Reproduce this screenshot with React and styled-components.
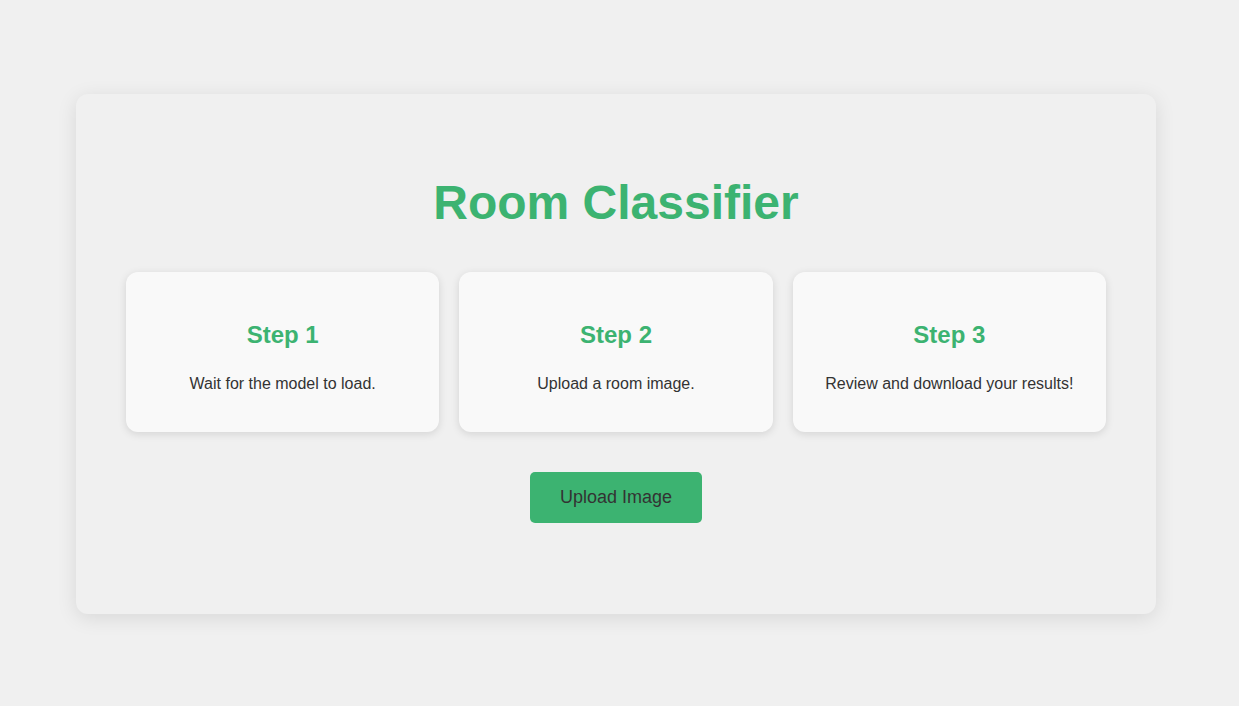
import React from "react";
import styled, { createGlobalStyle } from "styled-components";

const GlobalStyle = createGlobalStyle`
  html, body {
    margin: 0;
    padding: 0;
    background-color: #f0f0f0;
    font-family: "Liberation Sans", Arial, sans-serif;
    color: #333;
  }
`;

const Page = styled.div`
  min-height: 100vh;
  box-sizing: border-box;
  padding: 94px 83px 92px 76px;
  display: flex;
  justify-content: center;
  align-items: flex-start;
`;

const Container = styled.div`
  width: 1080px;
  box-sizing: border-box;
  padding: 50px;
  background-color: #f0f0f0;
  border-radius: 12px;
  box-shadow: 0 4px 20px rgba(0, 0, 0, 0.1);
  display: flex;
  flex-direction: column;
  align-items: center;
`;

const Title = styled.h1`
  margin: 31px 0 41px;
  font-size: 48px;
  line-height: 56px;
  font-weight: bold;
  color: #3cb371;
  text-align: center;
`;

const Steps = styled.div`
  width: 100%;
  display: grid;
  grid-template-columns: repeat(3, 1fr);
  gap: 20px;
`;

const StepCard = styled.div`
  padding: 20px;
  background-color: #f9f9f9;
  border-radius: 12px;
  box-shadow: 0 2px 8px rgba(0, 0, 0, 0.12);
  text-align: center;
`;

const StepTitle = styled.h2`
  margin: 24px 0 17px;
  font-size: 24px;
  line-height: 38px;
  font-weight: bold;
  color: #3cb371;
`;

const StepText = styled.p`
  margin: 0 0 15px;
  font-size: 16px;
  line-height: 26px;
  color: #333;
`;

const UploadButton = styled.button`
  margin: 40px 0 41px;
  padding: 15px 30px;
  font-family: "Liberation Sans", Arial, sans-serif;
  font-size: 18px;
  line-height: 21px;
  color: #333;
  background-color: #3cb371;
  border: none;
  border-radius: 5px;
  cursor: pointer;
`;

const steps = [
  { title: "Step 1", text: "Wait for the model to load." },
  { title: "Step 2", text: "Upload a room image." },
  { title: "Step 3", text: "Review and download your results!" },
];

const App = () => {
  return (
    <>
      <GlobalStyle />
      <Page>
        <Container>
          <Title>Room Classifier</Title>
          <Steps>
            {steps.map((step) => (
              <StepCard key={step.title}>
                <StepTitle>{step.title}</StepTitle>
                <StepText>{step.text}</StepText>
              </StepCard>
            ))}
          </Steps>
          <UploadButton>Upload Image</UploadButton>
        </Container>
      </Page>
    </>
  );
};

export default App;
